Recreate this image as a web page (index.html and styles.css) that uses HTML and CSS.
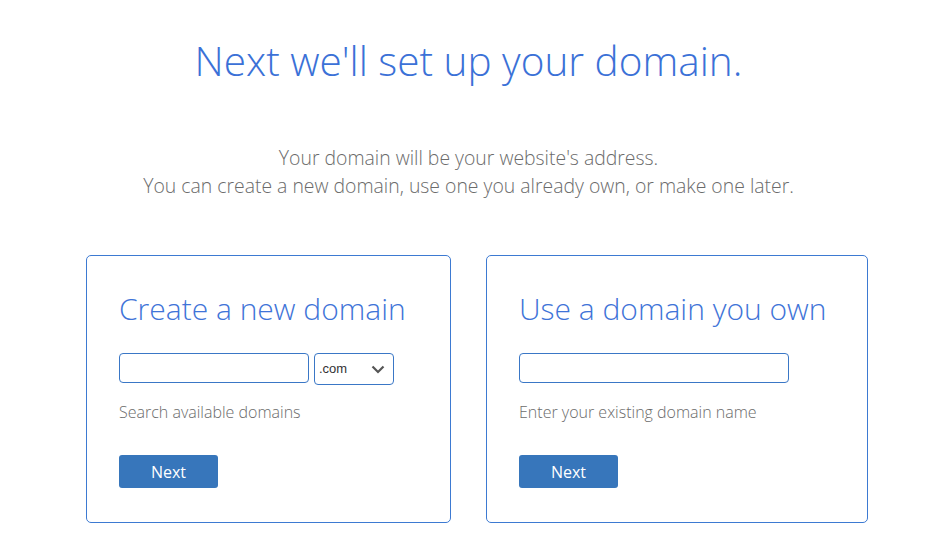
FILE: index.html
```html
<!DOCTYPE html>
<html lang="en">
<head>
<meta charset="utf-8">
<title>Domain setup</title>
<link rel="stylesheet" href="styles.css">
</head>
<body>
<main class="page">
  <h1 class="title">Next we'll set up your domain.</h1>
  <p class="intro">Your domain will be your website's address.<br>You can create a new domain, use one you already own, or make one later.</p>
  <div class="cards">
    <section class="card card-new">
      <h2 class="card-title">Create a new domain</h2>
      <div class="field-row">
        <input class="text-input input-new" type="text">
        <div class="select">
          <span class="select-value">.com</span>
          <svg class="chevron" width="14" height="9" viewBox="0 0 14 9"><path d="M1.5 1.5 L7 7 L12.5 1.5" fill="none" stroke="#555" stroke-width="2.2"/></svg>
        </div>
      </div>
      <p class="hint">Search available domains</p>
      <button class="btn" type="button">Next</button>
    </section>
    <section class="card card-own">
      <h2 class="card-title">Use a domain you own</h2>
      <div class="field-row">
        <input class="text-input input-own" type="text">
      </div>
      <p class="hint">Enter your existing domain name</p>
      <button class="btn" type="button">Next</button>
    </section>
  </div>
</main>
</body>
</html>
```

FILE: styles.css
```css
html, body {
  margin: 0;
  padding: 0;
  background: #ffffff;
}

body {
  font-family: "Open Sans", "Liberation Sans", sans-serif;
  font-weight: 300;
  color: #666666;
}

.page {
  display: flex;
  flex-direction: column;
  align-items: center;
  padding-top: 34px;
}

.title {
  margin: 0;
  font-size: 40.5px;
  font-weight: 300;
  line-height: 54px;
  color: #3b71d7;
  padding-left: 10px;
}

.intro {
  margin: 56px 0 0;
  font-size: 19.4px;
  line-height: 28px;
  text-align: center;
  color: #6b6b6b;
  padding-left: 10px;
}

.cards {
  display: flex;
  gap: 35px;
  margin-top: 55px;
  align-self: flex-start;
  margin-left: 86px;
}

.card {
  box-sizing: border-box;
  border: 1px solid #3d7ad2;
  border-radius: 5px;
  padding: 32px 32px 34px 32px;
  display: flex;
  flex-direction: column;
  align-items: flex-start;
}

.card-new { width: 365px; }
.card-own { width: 382px; }

.card-title {
  margin: 0;
  font-size: 30px;
  font-weight: 300;
  line-height: 41px;
  color: #3f74d8;
}

.field-row {
  display: flex;
  align-items: flex-start;
  gap: 5px;
  margin-top: 24px;
  height: 32px;
}

.text-input {
  box-sizing: border-box;
  height: 30px;
  border: 1px solid #3a77c6;
  border-radius: 4px;
  margin: 0;
  padding: 0 8px;
  background: #fff;
}

.input-new { width: 190px; }
.input-own { width: 270px; }

.select {
  box-sizing: border-box;
  width: 80px;
  height: 32px;
  border: 1px solid #3a77c6;
  border-radius: 4px;
  display: flex;
  align-items: center;
  justify-content: space-between;
  padding: 0 8px 0 4px;
}

.select-value {
  font-family: "Liberation Sans", Arial, sans-serif;
  font-weight: 400;
  font-size: 13px;
  color: #333333;
  margin-top: -2px;
}

.chevron {
  display: block;
}

.hint {
  margin: 16px 0 0;
  font-size: 16px;
  line-height: 22px;
  color: #6b6b6b;
}

.btn {
  margin-top: 32px;
  width: 99px;
  height: 33px;
  border: none;
  border-radius: 3px;
  background: #3776bb;
  color: #ffffff;
  font-family: "Open Sans", "Liberation Sans", sans-serif;
  font-weight: 400;
  font-size: 16px;
  padding: 0;
}
```
